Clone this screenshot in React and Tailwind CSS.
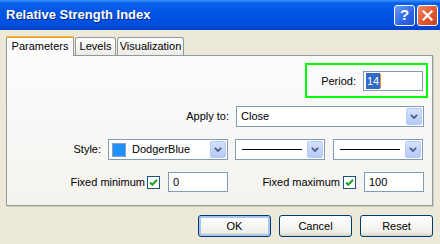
import React from 'react'

const font = "font-['Liberation_Sans',Arial,sans-serif]"

function Chevron() {
  return (
    <svg width="8" height="5" viewBox="0 0 8 5">
      <path d="M0.8 0.8 L4 4 L7.2 0.8" fill="none" stroke="#4D6185" strokeWidth="1.8" />
    </svg>
  )
}

function ArrowButton() {
  return (
    <div className="w-[16px] h-[17px] mr-px rounded-[2px] border border-[#B9CBF3] bg-[linear-gradient(to_bottom,#D6E2FB,#B4C9F7)] flex items-center justify-center">
      <Chevron />
    </div>
  )
}

function Combo({ width, children }) {
  return (
    <div className={`${width} h-[21px] border border-[#7F9DB9] bg-white flex items-center justify-between`}>
      <div className="flex-1 flex items-center min-w-0">{children}</div>
      <ArrowButton />
    </div>
  )
}

function CheckBox() {
  return (
    <div className="w-[13px] h-[13px] border border-[#1C5180] bg-white flex items-center justify-center">
      <svg width="9" height="9" viewBox="0 0 9 9">
        <path d="M1 4.5 L3.3 6.8 L8 1.8" fill="none" stroke="#21A121" strokeWidth="2" />
      </svg>
    </div>
  )
}

function TextBox({ width, children }) {
  return (
    <div className={`${width} h-[20px] border border-[#7F9DB9] bg-white flex items-center pl-[4px] text-black`}>
      {children}
    </div>
  )
}

function XpButton({ label, isDefault }) {
  return (
    <div
      className={`w-[73px] h-[22px] rounded-[3px] border border-[#003C74] bg-[linear-gradient(to_bottom,#FFFFFF,#F0F0EA_80%,#D6D0C5)] flex items-center justify-center text-black ${
        isDefault ? 'shadow-[inset_0_0_0_2px_#A9C4F3]' : ''
      }`}
    >
      {label}
    </div>
  )
}

export default function App() {
  return (
    <div className={`w-[440px] h-[244px] bg-[#ECE9D8] ${font} text-[11px] text-black overflow-hidden`}>
      {/* Title bar */}
      <div className="h-[30px] flex items-center justify-between pl-[6px] pr-[2px] bg-[linear-gradient(to_bottom,#3D95FF_0%,#0A5FEA_10%,#0055E5_45%,#0050DD_80%,#0041C8_100%)]">
        <span className="text-white font-bold text-[13px] [text-shadow:1px_1px_0_#0A2C88]">
          Relative Strength Index
        </span>
        <div className="flex items-center gap-[2px]">
          <div className="w-[21px] h-[21px] rounded-[3px] border border-white bg-[linear-gradient(135deg,#6E9CF7,#2E66E6_60%,#1F52D0)] flex items-center justify-center text-white font-bold text-[15px]">
            ?
          </div>
          <div className="w-[21px] h-[21px] rounded-[3px] border border-white bg-[linear-gradient(135deg,#F08A6A,#E05A32_50%,#C8401E)] flex items-center justify-center">
            <svg width="11" height="11" viewBox="0 0 11 11">
              <path d="M1.5 1.5 L9.5 9.5 M9.5 1.5 L1.5 9.5" stroke="white" strokeWidth="2.2" strokeLinecap="square" />
            </svg>
          </div>
        </div>
      </div>

      {/* Tabs */}
      <div className="pl-[6px] pt-[6px] flex items-end">
        <div className="relative z-10 -mb-px w-[68px] h-[20px] bg-[#FCFCFE] border-x border-[#919B9C] rounded-t-[3px] flex flex-col">
          <div className="h-[3px] -mx-px rounded-t-[3px] bg-[linear-gradient(to_bottom,#FFC83C,#E68B2C)]" />
          <div className="flex-1 flex items-center justify-center pb-[2px]">Parameters</div>
        </div>
        <div className="w-[41px] h-[18px] ml-px border border-b-0 border-[#919B9C] rounded-t-[3px] bg-[linear-gradient(to_bottom,#FFFFFF,#ECEBE6)] flex items-center justify-center">
          Levels
        </div>
        <div className="w-[67px] h-[18px] ml-[1px] border border-b-0 border-[#919B9C] rounded-t-[3px] bg-[linear-gradient(to_bottom,#FFFFFF,#ECEBE6)] flex items-center justify-center">
          Visualization
        </div>
      </div>

      {/* Panel */}
      <div className="ml-[6px] w-[427px] h-[151px] border border-[#919B9C] bg-[linear-gradient(to_bottom,#FCFCFE,#F4F3EE)] shadow-[1px_1px_0_#D0CEBF] flex flex-col">
        {/* Period */}
        <div className="flex justify-end pr-[4px] pt-[7px]">
          <div className="w-[123px] h-[35px] border-2 border-[#00FF00] flex items-center justify-end gap-[7px] pr-[3px] pt-[1px]">
            <span>Period:</span>
            <div className="w-[60px] h-[20px] border border-[#7F9DB9] bg-white flex items-center pl-[2px]">
              <span className="bg-[#316AC5] text-white px-px">14</span>
              <span className="w-px h-[14px] bg-[#E68B2C]" />
            </div>
          </div>
        </div>

        {/* Apply to */}
        <div className="flex items-center justify-end pr-[8px] mt-[8px] gap-[7px]">
          <span>Apply to:</span>
          <Combo width="w-[188px]">
            <span className="pl-[4px]">Close</span>
          </Combo>
        </div>

        {/* Style */}
        <div className="flex items-center justify-end pr-[9px] mt-[12px]">
          <span className="mr-[7px]">Style:</span>
          <Combo width="w-[120px]">
            <span className="ml-[3px] w-[14px] h-[14px] bg-[#1E90FF] border border-[#8CA0BC]" />
            <span className="ml-[6px]">DodgerBlue</span>
          </Combo>
          <div className="ml-[7px]">
            <Combo width="w-[90px]">
              <span className="ml-[6px] w-[60px] h-px bg-black" />
            </Combo>
          </div>
          <div className="ml-[8px]">
            <Combo width="w-[90px]">
              <span className="ml-[6px] w-[60px] h-px bg-black" />
            </Combo>
          </div>
        </div>

        {/* Fixed min / max */}
        <div className="flex items-center mt-[12px] pr-[8px]">
          <div className="w-[221px] flex items-center justify-end gap-[2px]">
            <span>Fixed minimum</span>
            <CheckBox />
            <div className="ml-[6px]">
              <TextBox width="w-[60px]">0</TextBox>
            </div>
          </div>
          <div className="flex-1 flex items-center justify-end gap-[3px]">
            <span>Fixed maximum</span>
            <CheckBox />
            <div className="ml-[5px]">
              <TextBox width="w-[60px]">100</TextBox>
            </div>
          </div>
        </div>
      </div>

      {/* Buttons */}
      <div className="flex justify-end gap-[8px] pr-[7px] mt-[9px]">
        <XpButton label="OK" isDefault />
        <XpButton label="Cancel" />
        <XpButton label="Reset" />
      </div>
    </div>
  )
}
